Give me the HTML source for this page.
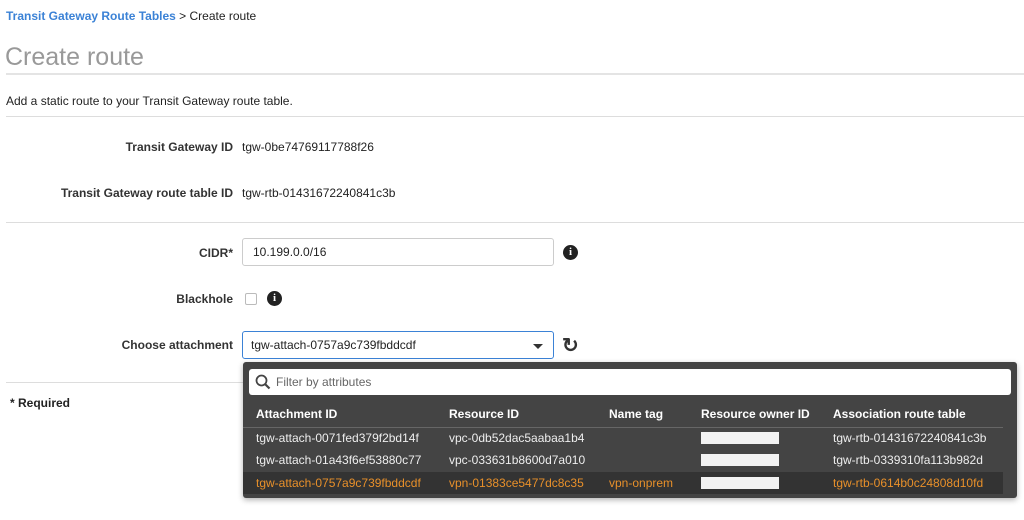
<!DOCTYPE html>
<html><head><style>
body{margin:0;width:1024px;height:520px;background:#fff;font-family:"Liberation Sans",Arial,sans-serif;font-size:12px;color:#222;position:relative;overflow:hidden}
.a{position:absolute;white-space:nowrap}
.hr{position:absolute;left:6px;right:0;height:1px;background:#ddd}
.lbl{position:absolute;right:791px;font-weight:bold;text-align:right;white-space:nowrap;color:#333}
.info{position:absolute;width:15px;height:15px;border-radius:50%;background:#222;color:#fff;font:bold 11px "Liberation Serif",serif;text-align:center;line-height:15px}
.dd{position:absolute;left:243px;top:362px;width:774px;height:136px;background:#444;border-radius:3px;box-shadow:0 2px 6px rgba(0,0,0,.3)}
.row{position:absolute;left:0;width:760px;height:22px;line-height:22px;color:#eee}
.row span{position:absolute}
.c1{left:13px}.c2{left:206px}.c3{left:366px}.c4{left:458px}.c5{left:590px}
.blk{background:#f2f2f2;width:78px;height:12px;top:5px}
</style></head><body>
<div class="a" style="left:6px;top:9px;font-size:12px"><b style="color:#3b82d6">Transit Gateway Route Tables</b> &gt; Create route</div>
<div class="a" style="left:5px;top:43px;font-size:25px;color:#999">Create route</div>
<div class="hr" style="top:73px;height:2px;background:#e4e4e4"></div>
<div class="a" style="left:6px;top:94px">Add a static route to your Transit Gateway route table.</div>
<div class="hr" style="top:116px"></div>
<div class="lbl" style="top:140px">Transit Gateway ID</div>
<div class="a" style="left:242px;top:140px">tgw-0be74769117788f26</div>
<div class="lbl" style="top:186px">Transit Gateway route table ID</div>
<div class="a" style="left:242px;top:186px">tgw-rtb-01431672240841c3b</div>
<div class="hr" style="top:222px"></div>
<div class="lbl" style="top:246px">CIDR*</div>
<div class="a" style="left:242px;top:238px;width:312px;height:28px;border:1px solid #ccc;border-radius:3px;box-sizing:border-box;padding-left:10px;line-height:26px">10.199.0.0/16</div>
<div class="info" style="left:563px;top:245px">i</div>
<div class="lbl" style="top:292px">Blackhole</div>
<div class="a" style="left:245px;top:293px;width:10px;height:10px;border:1px solid #bbb;border-radius:2px"></div>
<div class="info" style="left:267px;top:291px">i</div>
<div class="lbl" style="top:338px">Choose attachment</div>
<div class="a" style="left:242px;top:331px;width:312px;height:28px;border:1px solid #3b82d6;border-radius:3px;box-sizing:border-box;padding-left:8px;line-height:26px">tgw-attach-0757a9c739fbddcdf</div>
<div class="a" style="left:533px;top:344px;border-left:5px solid transparent;border-right:5px solid transparent;border-top:5px solid #333"></div>
<div class="a" style="left:562px;top:333px;font-size:20px;font-weight:bold;color:#333">↻</div>
<div class="hr" style="top:382px;right:780px"></div>
<div class="a" style="left:10px;top:396px;font-weight:bold">* Required</div>
<div class="dd">
 <div class="a" style="left:6px;top:7px;width:762px;height:26px;background:#fff;border-radius:3px">
  <svg class="a" style="left:6px;top:5px" width="16" height="16" viewBox="0 0 16 16"><circle cx="6.5" cy="6.5" r="5" fill="none" stroke="#444" stroke-width="1.8"/><line x1="10" y1="10" x2="14.5" y2="14.5" stroke="#444" stroke-width="2.2"/></svg>
  <span class="a" style="left:27px;top:6px;color:#666">Filter by attributes</span>
 </div>
 <div class="row" style="top:41px;font-weight:bold;color:#fff"><span class="c1">Attachment ID</span><span class="c2">Resource ID</span><span class="c3">Name tag</span><span class="c4">Resource owner ID</span><span class="c5">Association route table</span></div>
 <div class="a" style="left:0;top:65px;width:760px;height:1px;background:#666"></div>
 <div class="row" style="top:65px"><span class="c1">tgw-attach-0071fed379f2bd14f</span><span class="c2">vpc-0db52dac5aabaa1b4</span><span class="c4 blk"></span><span class="c5">tgw-rtb-01431672240841c3b</span></div>
 <div class="row" style="top:87px"><span class="c1">tgw-attach-01a43f6ef53880c77</span><span class="c2">vpc-033631b8600d7a010</span><span class="c4 blk"></span><span class="c5">tgw-rtb-0339310fa113b982d</span></div>
 <div class="row" style="top:110px;background:#333;color:#e8902a"><span class="c1">tgw-attach-0757a9c739fbddcdf</span><span class="c2">vpn-01383ce5477dc8c35</span><span class="c3">vpn-onprem</span><span class="c4 blk"></span><span class="c5">tgw-rtb-0614b0c24808d10fd</span></div>
</div>
</body></html>
